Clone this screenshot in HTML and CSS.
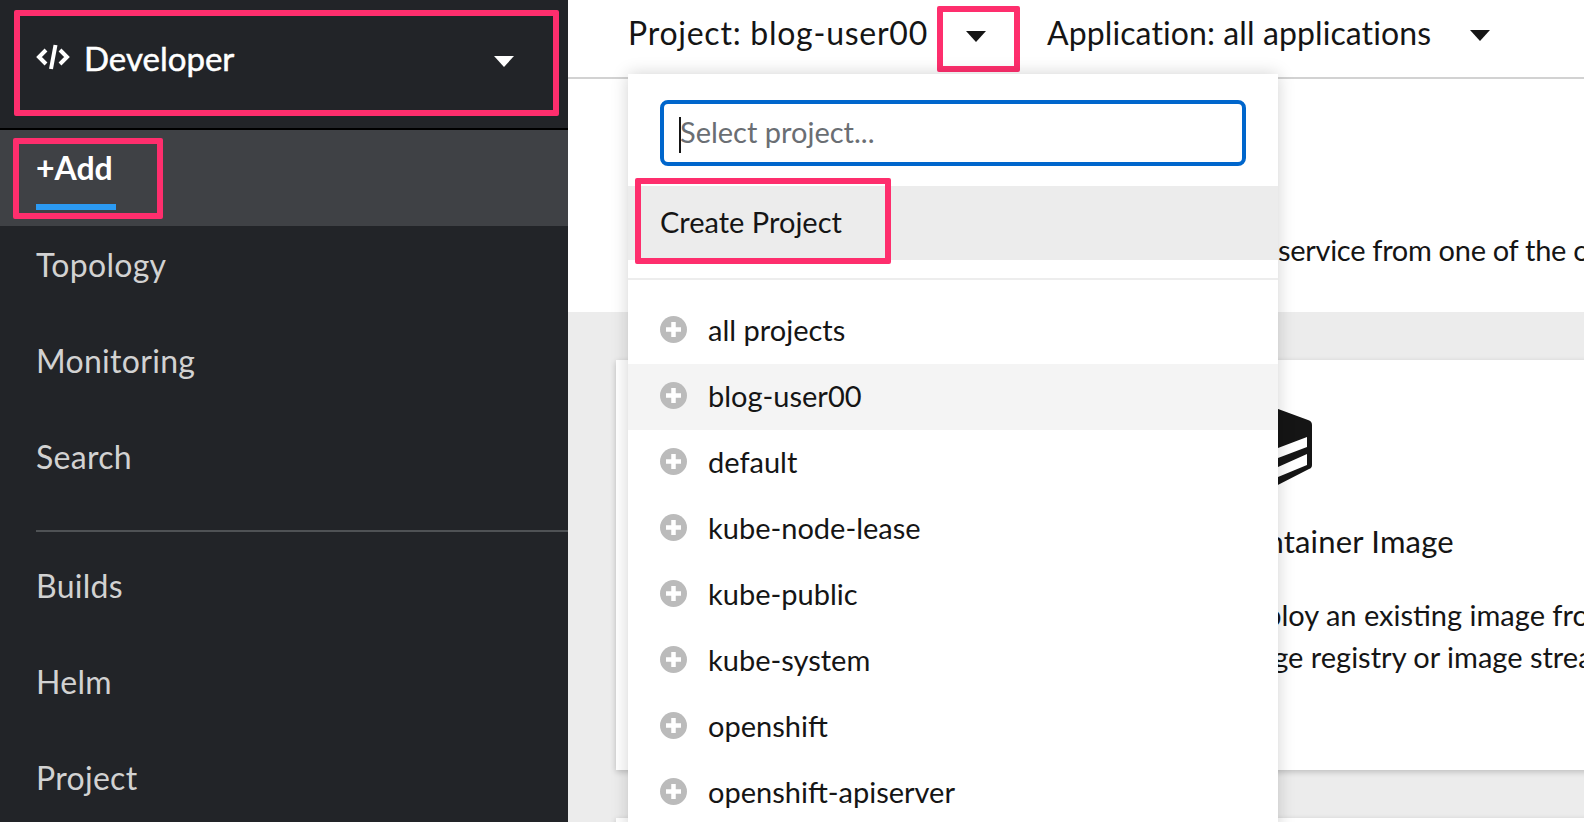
FILE: index.html
```html
<!DOCTYPE html>
<html lang="en">
<head>
    <meta charset="UTF-8">
    <title>Add - Developer</title>
    <link rel="stylesheet" href="styles.css">
</head>
<body>
    <div class="page">
        <aside class="sidebar">
            <div class="brand">
                <div class="brand-box">
                    <svg class="brand-icon" viewBox="0 0 34 28" aria-hidden="true">
                        <path d="M10 7 L3 14 L10 21 M24 7 L31 14 L24 21" fill="none" stroke="#fff" stroke-width="4"/>
                        <path d="M19.5 2 L15 26" fill="none" stroke="#fff" stroke-width="4"/>
                    </svg>
                    <span class="brand-name">Developer</span>
                    <span class="caret caret-white brand-caret"></span>
                </div>
            </div>
            <nav>
                <div class="nav-active">
                    <a class="add-box" href="#">+Add</a>
                </div>
                <a class="nav-item" href="#">Topology</a>
                <a class="nav-item" href="#">Monitoring</a>
                <a class="nav-item" href="#">Search</a>
                <hr class="nav-line">
                <a class="nav-item" href="#">Builds</a>
                <a class="nav-item" href="#">Helm</a>
                <a class="nav-item" href="#">Project</a>
            </nav>
        </aside>

        <main class="main">
            <header class="topbar">
                <span class="top-label project-label">Project: blog-user00</span>
                <span class="caret-box"><span class="caret"></span></span>
                <span class="top-label app-label">Application: all applications</span>
                <span class="caret app-caret"></span>
            </header>

            <section class="intro">
                <p>service from one of the options</p>
            </section>

            <section class="catalog">
                <div class="card">
                    <svg class="card-icon" viewBox="0 0 84 84" aria-hidden="true">
                        <path d="M42 1 L80 15 Q84 16 84 20 L84 60 Q84 63 81 64 L42 84 L3 64 Q0 63 0 60 L0 20 Q0 16 4 15 Z" fill="#151515"/>
                        <path d="M50 43 L79 32 L79 42 L50 53 Z M50 62 L79 49 L79 60 L50 72 Z" fill="#fff"/>
                    </svg>
                    <h3>Container Image</h3>
                    <p>Deploy an existing image from an<br>image registry or image stream</p>
                </div>
                <div class="card"></div>
            </section>

            <div class="popup">
                <div class="search">
                    <input type="text" placeholder="Select project...">
                    <span class="text-cursor"></span>
                </div>
                <div class="create">Create Project</div>
                <span class="create-mark"></span>
                <hr class="popup-line">
                <ul class="projects">
                    <li><svg class="plus" viewBox="0 0 27 27"><circle cx="13.5" cy="13.5" r="13.5"/><path d="M13.5 6v15M6 13.5h15"/></svg>all projects</li>
                    <li class="current"><svg class="plus" viewBox="0 0 27 27"><circle cx="13.5" cy="13.5" r="13.5"/><path d="M13.5 6v15M6 13.5h15"/></svg>blog-user00</li>
                    <li><svg class="plus" viewBox="0 0 27 27"><circle cx="13.5" cy="13.5" r="13.5"/><path d="M13.5 6v15M6 13.5h15"/></svg>default</li>
                    <li><svg class="plus" viewBox="0 0 27 27"><circle cx="13.5" cy="13.5" r="13.5"/><path d="M13.5 6v15M6 13.5h15"/></svg>kube-node-lease</li>
                    <li><svg class="plus" viewBox="0 0 27 27"><circle cx="13.5" cy="13.5" r="13.5"/><path d="M13.5 6v15M6 13.5h15"/></svg>kube-public</li>
                    <li><svg class="plus" viewBox="0 0 27 27"><circle cx="13.5" cy="13.5" r="13.5"/><path d="M13.5 6v15M6 13.5h15"/></svg>kube-system</li>
                    <li><svg class="plus" viewBox="0 0 27 27"><circle cx="13.5" cy="13.5" r="13.5"/><path d="M13.5 6v15M6 13.5h15"/></svg>openshift</li>
                    <li><svg class="plus" viewBox="0 0 27 27"><circle cx="13.5" cy="13.5" r="13.5"/><path d="M13.5 6v15M6 13.5h15"/></svg>openshift-apiserver</li>
                </ul>
            </div>
        </main>
    </div>
</body>
</html>
```

FILE: styles.css
```css
* {
    box-sizing: border-box;
}
body {
    margin: 0;
    font-family: Lato, "Noto Sans", sans-serif;
    font-size: 29px;
    color: #151515;
    background-color: #fff;
}
.page {
    display: flex;
    height: 822px;
    overflow: hidden;
}

/* Barra lateral */
.sidebar {
    width: 568px;
    flex-shrink: 0;
    background-color: #222428;
    color: #d2d2d2;
}
.brand {
    height: 130px;
    padding: 10px 9px 12px 14px;
    border-bottom: 2px solid #000;
}
.brand-box {
    display: flex;
    align-items: flex-start;
    height: 106px;
    padding: 27px 39px 0 16px;
    border: 6px solid #fe2e6d;
    border-radius: 2px;
}
.brand-icon {
    width: 34px;
    height: 28px;
}
.brand-name {
    margin-left: 14px;
    margin-top: -4px;
    color: #fff;
    font-size: 33px;
    line-height: 38px;
    -webkit-text-stroke: 0.5px #fff;
}
.brand-caret {
    margin-left: auto;
    margin-top: 13px;
}
.caret {
    display: block;
    width: 0;
    height: 0;
    border-left: 10px solid transparent;
    border-right: 10px solid transparent;
    border-top: 11px solid #151515;
}
.caret-white {
    border-top-color: #fff;
}
.nav-active {
    height: 96px;
    padding: 8px 0 0 13px;
    background-color: #3f4145;
}
.add-box {
    display: block;
    width: 150px;
    height: 81px;
    padding: 6px 0 0 17px;
    border: 6px solid #fe2e6d;
    border-radius: 2px;
    color: #fff;
    font-size: 32px;
    font-weight: 700;
    text-decoration: none;
    line-height: 36px;
}
.add-box::after {
    content: "";
    display: block;
    width: 80px;
    height: 6px;
    margin-top: 18px;
    background-color: #2b9af3;
}
.nav-item {
    display: block;
    height: 96px;
    padding: 20px 0 0 36px;
    color: #d2d2d2;
    font-size: 32px;
    letter-spacing: 0.3px;
    line-height: 38px;
    text-decoration: none;
}
.nav-line {
    height: 2px;
    margin: 16px 0 15px 36px;
    border: none;
    background-color: #4f5255;
}

/* Area principal */
.main {
    flex: 1;
    min-width: 0;
    position: relative;
    display: flex;
    flex-direction: column;
    overflow: hidden;
}
.topbar {
    display: flex;
    flex-shrink: 0;
    align-items: flex-start;
    height: 79px;
    padding: 6px 0 0 60px;
    border-bottom: 2px solid #d2d2d2;
}
.top-label {
    font-size: 32px;
    line-height: 54px;
    white-space: nowrap;
}
.project-label {
    letter-spacing: 0.75px;
}
.caret-box {
    display: flex;
    justify-content: center;
    width: 83px;
    height: 66px;
    margin-left: 9px;
    padding: 19px 6px 0 0;
    border: 6px solid #fe2e6d;
    border-radius: 2px;
}
.app-label {
    margin-left: 27px;
    letter-spacing: 0.1px;
}
.app-caret {
    margin: 24px 0 0 39px;
}
.intro {
    flex-shrink: 0;
    height: 233px;
    padding: 149px 0 0 710px;
    letter-spacing: -0.3px;
    white-space: nowrap;
}
.intro p {
    margin: 0;
    line-height: 44px;
}
.catalog {
    flex: 1;
    padding: 48px 0 0 48px;
    background-color: #ececec;
}
.card {
    width: 1100px;
    height: 410px;
    margin-bottom: 48px;
    padding: 45px 0 0 612px;
    background-color: #fff;
    box-shadow: 0 2px 6px rgba(0, 0, 0, 0.2);
}
.card-icon {
    display: block;
    width: 84px;
    height: 84px;
}
.card h3 {
    margin: 30px 0 0;
    font-size: 31px;
    font-weight: 400;
    letter-spacing: 0.2px;
    line-height: 44px;
    white-space: nowrap;
}
.card p {
    margin: 31px 0 0;
    line-height: 42px;
    white-space: nowrap;
}

/* Menu de projetos */
.popup {
    position: absolute;
    top: 74px;
    left: 60px;
    width: 650px;
    height: 760px;
    background-color: #fff;
    box-shadow: 0 0 16px rgba(0, 0, 0, 0.18);
}
.search {
    position: relative;
    padding: 26px 32px 20px;
}
.search input {
    display: block;
    width: 100%;
    height: 66px;
    padding: 0 0 4px 16px;
    border: 4px solid #06c;
    border-radius: 8px;
    outline: none;
    font-family: inherit;
    font-size: 29px;
    color: #151515;
}
.search input::placeholder {
    color: #6a6e73;
}
.text-cursor {
    position: absolute;
    top: 43px;
    left: 51px;
    width: 2px;
    height: 36px;
    background-color: #151515;
}
.create {
    height: 74px;
    padding-left: 32px;
    background-color: #ececec;
    line-height: 72px;
}
.create-mark {
    position: absolute;
    top: 104px;
    left: 7px;
    width: 256px;
    height: 86px;
    border: 6px solid #fe2e6d;
    border-radius: 2px;
}
.popup-line {
    height: 2px;
    margin: 18px 0;
    border: none;
    background-color: #ededed;
}
.projects {
    margin: 0;
    padding: 0;
    list-style: none;
}
.projects li {
    display: flex;
    align-items: center;
    height: 66px;
    padding: 0 0 4px 32px;
}
.projects .current {
    background-color: #f4f4f4;
}
.plus {
    width: 27px;
    height: 27px;
    margin-right: 21px;
    flex-shrink: 0;
}
.plus circle {
    fill: #bbb;
}
.plus path {
    fill: none;
    stroke: #fff;
    stroke-width: 4.5;
}
```
